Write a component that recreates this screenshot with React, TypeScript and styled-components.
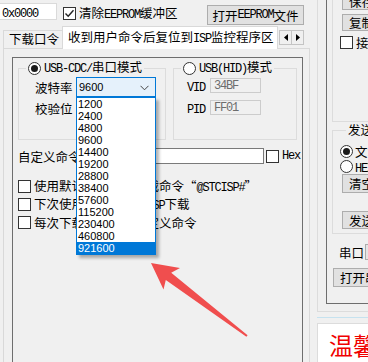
import React from 'react'
import styled, { createGlobalStyle } from 'styled-components'

const GlobalStyle = createGlobalStyle`
  html, body {
    margin: 0;
    padding: 0;
  }
  body {
    width: 368px;
    height: 362px;
    overflow: hidden;
    background: #f0f0f0;
    font-family: "Noto Sans CJK SC", sans-serif;
    font-size: 12.5px;
    color: #000;
  }
`

const rates = ['1200', '2400', '4800', '9600', '14400', '19200', '28800', '38400', '57600', '115200', '230400', '460800', '921600']

export default function App(): JSX.Element {
    return (
        <Screen>
            <GlobalStyle />
            <LeftColumn>
                <TopRow>
                    <AddrBox><Lat>0x0000</Lat></AddrBox>
                    <CheckLine $top={7} $left={6}>
                        <CheckBox checked />
                        <span>清除<Lat>EEPROM</Lat>缓冲区</span>
                    </CheckLine>
                    <Button $width={97} $height={20} $top={5} $right={6} $center>打开<Lat>EEPROM</Lat>文件</Button>
                </TopRow>

                <TabStrip>
                    <Tab>下载口令</Tab>
                    <Tab $active>收到用户命令后复位到<Lat>ISP</Lat>监控程序区</Tab>
                    <ScrollBtns>
                        <ScrollBtn><Tri $dir="left" /></ScrollBtn>
                        <ScrollBtn><Tri $dir="right" /></ScrollBtn>
                    </ScrollBtns>
                </TabStrip>

                <TabPage>
                    <Frame>
                        <GroupRow>
                            <Group $width={148}>
                                <Legend>
                                    <Radio checked />
                                    <span><Lat>USB-CDC/</Lat>串口模式</span>
                                </Legend>
                                <FieldRow $top={2} $height={20} $indent={16}>
                                    <FieldLabel $width={41}>波特率</FieldLabel>
                                    <Combo $active>
                                        9600
                                        <Chevron />
                                        <DropList>
                                            {rates.map((r) => (
                                                <DropItem key={r} $selected={r === '921600'}>{r}</DropItem>
                                            ))}
                                        </DropList>
                                    </Combo>
                                </FieldRow>
                                <FieldRow $top={3} $height={17} $indent={16}>
                                    <FieldLabel $width={41}>校验位</FieldLabel>
                                </FieldRow>
                            </Group>
                            <Group $width={124}>
                                <Legend>
                                    <Radio />
                                    <span><Lat>USB(HID)</Lat>模式</span>
                                </Legend>
                                <FieldRow $top={3} $height={15} $indent={13}>
                                    <FieldLabel $width={23}><Lat>VID</Lat></FieldLabel>
                                    <TextBox $width={51} $disabled><Lat>34BF</Lat></TextBox>
                                </FieldRow>
                                <FieldRow $top={7} $height={15} $indent={13}>
                                    <FieldLabel $width={23}><Lat>PID</Lat></FieldLabel>
                                    <TextBox $width={51} $disabled><Lat>FF01</Lat></TextBox>
                                </FieldRow>
                            </Group>
                        </GroupRow>

                        <FieldRow $top={8} $height={16} $indent={0}>
                            <FieldLabel $width={58}>自定义命令</FieldLabel>
                            <TextBox $width={188} />
                            <CheckLine $top={0} $left={2}>
                                <CheckBox />
                                <Lat>Hex</Lat>
                            </CheckLine>
                        </FieldRow>

                        <Options>
                            <CheckLine $top={0} $left={0}>
                                <CheckBox />
                                <span>使用默认的自定义下载命令“<Lat>@STCISP#</Lat>”</span>
                            </CheckLine>
                            <CheckLine $top={0} $left={0}>
                                <CheckBox />
                                <span>下次使用时自动进入<Lat>ISP</Lat>下载</span>
                            </CheckLine>
                            <CheckLine $top={0} $left={0}>
                                <CheckBox />
                                <span>每次下载前都发送自定义命令</span>
                            </CheckLine>
                        </Options>
                    </Frame>
                </TabPage>
            </LeftColumn>

            <RightPanel>
                <RightInner>
                    <UpperBox>
                        <SideFrame>
                            <RecvGroup>
                                <Button $width={60} $height={17} $top={0}>保存</Button>
                                <Button $width={60} $height={17} $top={4}>复制</Button>
                                <CheckLine $top={5} $left={-2}>
                                    <CheckBox />
                                    <span>接收</span>
                                </CheckLine>
                            </RecvGroup>
                            <SendGroup>
                                <Legend $left={6}>发送缓冲区</Legend>
                                <RadioLine $top={7}>
                                    <Radio checked />
                                    <span>文本模式</span>
                                </RadioLine>
                                <RadioLine $top={1}>
                                    <Radio />
                                    <span><Lat>HEX</Lat>模式</span>
                                </RadioLine>
                                <Button $width={60} $height={19} $top={1} $left={2}>清空</Button>
                                <Button $width={60} $height={18} $top={18} $left={2}>发送</Button>
                            </SendGroup>
                            <FieldRow $top={10} $height={16} $indent={7}>
                                <FieldLabel $width={26}>串口</FieldLabel>
                                <Combo>COM3</Combo>
                            </FieldRow>
                            <Button $width={100} $height={19} $top={8} $left={1}>打开串口</Button>
                        </SideFrame>
                    </UpperBox>
                    <Splitter />
                    <Notice>温馨提示</Notice>
                </RightInner>
            </RightPanel>

            <Pointer viewBox="0 0 368 362" width={368} height={362}>
                <polygon
                    points="151,263 180,268 171.2,272.7 247.6,335.2 246.4,336.8 165.8,279.9 163.5,289.5"
                    fill="#f04e4e"
                />
            </Pointer>
        </Screen>
    )
}

function CheckBox(props: { checked?: boolean }): JSX.Element {
    return (
        <Box>
            {props.checked && (
                <svg width="11" height="11" viewBox="0 0 11 11">
                    <polyline points="1.5,5.5 4.2,8.2 9.5,2.2" fill="none" stroke="#222" strokeWidth="1.4" />
                </svg>
            )}
        </Box>
    )
}

function Radio(props: { checked?: boolean }): JSX.Element {
    return <Round>{props.checked && <Dot />}</Round>
}

function Chevron(): JSX.Element {
    return (
        <ChevronIcon width="9" height="6" viewBox="0 0 9 6">
            <polyline points="0.5,0.8 4.5,4.8 8.5,0.8" fill="none" stroke="#444" strokeWidth="1" />
        </ChevronIcon>
    )
}

function Tri(props: { $dir: 'left' | 'right' }): JSX.Element {
    return (
        <svg width="4" height="7" viewBox="0 0 4 7">
            {props.$dir === 'left'
                ? <polygon points="4,0 0,3.5 4,7" fill="#000" />
                : <polygon points="0,0 4,3.5 0,7" fill="#000" />}
        </svg>
    )
}

const Screen = styled.div`
    position: relative;
    display: flex;
    width: 368px;
    height: 362px;
    overflow: hidden;
`

const Lat = styled.span`
    font-family: "Liberation Mono", monospace;
    font-size: 12px;
    letter-spacing: -1.2px;
`

const LeftColumn = styled.div`
    width: 310px;
    flex: none;
    display: flex;
    flex-direction: column;
`

const TopRow = styled.div`
    height: 26px;
    display: flex;
    align-items: flex-start;
`

const AddrBox = styled.div`
    margin-top: 3px;
    width: 57px;
    height: 17px;
    box-sizing: border-box;
    background: #fff;
    border: 1px solid #dadada;
    border-left: none;
    padding-left: 2px;
    line-height: 15px;
`

const CheckLine = styled.label<{ $top: number; $left: number }>`
    display: flex;
    align-items: center;
    gap: 3px;
    height: 13px;
    line-height: 13px;
    margin-top: ${(p) => p.$top}px;
    margin-left: ${(p) => p.$left}px;
    white-space: nowrap;
`

const RadioLine = styled.div<{ $top: number }>`
    display: flex;
    align-items: center;
    gap: 2px;
    height: 14px;
    margin-top: ${(p) => p.$top}px;
    white-space: nowrap;
`

const Box = styled.span`
    width: 13px;
    height: 13px;
    box-sizing: border-box;
    border: 1px solid #333;
    background: #fff;
    display: inline-flex;
    align-items: center;
    justify-content: center;
    flex: none;
`

const Round = styled.span`
    width: 13px;
    height: 13px;
    box-sizing: border-box;
    border: 1px solid #333;
    border-radius: 50%;
    background: #fff;
    display: inline-flex;
    align-items: center;
    justify-content: center;
    flex: none;
`

const Dot = styled.span`
    width: 7px;
    height: 7px;
    border-radius: 50%;
    background: #1a1a1a;
`

const Button = styled.div<{ $width: number; $height: number; $top: number; $left?: number; $right?: number; $center?: boolean }>`
    width: ${(p) => p.$width}px;
    height: ${(p) => p.$height}px;
    margin-top: ${(p) => p.$top}px;
    margin-left: ${(p) => (p.$right !== undefined ? 'auto' : `${p.$left ?? 0}px`)};
    margin-right: ${(p) => p.$right ?? 0}px;
    box-sizing: border-box;
    border: 1px solid #adadad;
    background: #e1e1e1;
    display: flex;
    align-items: center;
    justify-content: ${(p) => (p.$center ? 'center' : 'flex-start')};
    padding-left: ${(p) => (p.$center ? 0 : 6)}px;
    white-space: nowrap;
    flex: none;
`

const TabStrip = styled.div`
    position: relative;
    z-index: 1;
    height: 22px;
    display: flex;
    align-items: flex-end;
    padding-left: 3px;
`

const Tab = styled.div<{ $active?: boolean }>`
    box-sizing: border-box;
    width: ${(p) => (p.$active ? 216 : 60)}px;
    height: ${(p) => (p.$active ? 23 : 18)}px;
    margin-left: ${(p) => (p.$active ? -1 : 0)}px;
    margin-bottom: ${(p) => (p.$active ? -1 : 0)}px;
    border: 1px solid #d9d9d9;
    border-bottom: none;
    background: ${(p) => (p.$active ? '#fff' : '#f0f0f0')};
    padding-left: 5px;
    line-height: ${(p) => (p.$active ? 20 : 16)}px;
    white-space: nowrap;
`

const ScrollBtns = styled.div`
    display: flex;
    align-self: flex-start;
    margin: 4px 6px 0 auto;
`

const ScrollBtn = styled.div`
    width: 13px;
    height: 15px;
    box-sizing: border-box;
    border: 1px solid #c4c4c4;
    background: #f0f0f0;
    display: flex;
    align-items: center;
    justify-content: center;
    & + & {
        width: 12px;
        border-left: none;
    }
`

const TabPage = styled.div`
    flex: 1;
    margin-left: 3px;
    border: 1px solid #d9d9d9;
    border-bottom: none;
    padding: 8px 6px 0 8px;
    display: flex;
    flex-direction: column;
`

const Frame = styled.div`
    flex: 1;
    border: 1px solid #6e6e6e;
    border-bottom: none;
    padding: 3px 5px 0 5px;
    display: flex;
    flex-direction: column;
`

const GroupRow = styled.div`
    display: flex;
    gap: 7px;
`

const Group = styled.fieldset<{ $width: number }>`
    width: ${(p) => p.$width}px;
    height: 79px;
    box-sizing: border-box;
    margin: 0;
    padding: 0;
    border: 1px solid #dcdcdc;
    min-width: 0;
`

const Legend = styled.legend<{ $left?: number }>`
    margin-left: ${(p) => p.$left ?? 7}px;
    padding: 0 2px;
    height: 14px;
    line-height: 14px;
    display: flex;
    align-items: center;
    gap: 3px;
    white-space: nowrap;
`

const FieldRow = styled.div<{ $top: number; $height: number; $indent: number }>`
    display: flex;
    align-items: center;
    margin-top: ${(p) => p.$top}px;
    height: ${(p) => p.$height}px;
    padding-left: ${(p) => p.$indent}px;
    white-space: nowrap;
`

const FieldLabel = styled.span<{ $width: number }>`
    width: ${(p) => p.$width}px;
    flex: none;
`

const TextBox = styled.div<{ $width: number; $disabled?: boolean }>`
    width: ${(p) => p.$width}px;
    height: 100%;
    box-sizing: border-box;
    flex: none;
    border: 1px solid ${(p) => (p.$disabled ? '#cccccc' : '#7a7a7a')};
    background: ${(p) => (p.$disabled ? '#f0f0f0' : '#fff')};
    color: ${(p) => (p.$disabled ? '#6d6d6d' : '#000')};
    padding-left: 3px;
    display: flex;
    align-items: center;
`

const Combo = styled.div<{ $active?: boolean }>`
    position: relative;
    width: 80px;
    height: 100%;
    box-sizing: border-box;
    flex: none;
    border: 1px solid ${(p) => (p.$active ? '#0078d7' : '#acacac')};
    background: ${(p) => (p.$active ? '#e5f1fb' : '#e5e5e5')};
    padding-left: 2px;
    display: flex;
    align-items: center;
    font-family: "Liberation Sans", sans-serif;
    font-size: 11px;
`

const ChevronIcon = styled.svg`
    position: absolute;
    right: 6px;
    top: 7px;
`

const DropList = styled.div`
    position: absolute;
    z-index: 5;
    left: -1px;
    top: calc(100% + 1px);
    width: 80px;
    box-sizing: border-box;
    border: 1px solid #0078d7;
    background: #fff;
    box-shadow: 3px 3px 3px rgba(0, 0, 0, 0.3);
`

const DropItem = styled.div<{ $selected?: boolean }>`
    height: 12px;
    line-height: 12px;
    padding-left: 1px;
    background: ${(p) => (p.$selected ? '#0078d7' : 'transparent')};
    color: ${(p) => (p.$selected ? '#fff' : '#000')};
`

const Options = styled.div`
    margin-top: 16px;
    display: flex;
    flex-direction: column;
    gap: 5px;
`

const RightPanel = styled.div`
    flex: 1;
    overflow: hidden;
    padding-left: 7px;
`

const RightInner = styled.div`
    width: 160px;
    margin-top: -30px;
    display: flex;
    flex-direction: column;
`

const UpperBox = styled.div`
    border: 1px solid #dcdcdc;
    border-right: none;
    padding: 8px 0 7px 8px;
`

const SideFrame = styled.div`
    border: 1px solid #6e6e6e;
    border-right: none;
    padding: 5px 0 16px 5px;
    display: flex;
    flex-direction: column;
`

const RecvGroup = styled.div`
    height: 137px;
    box-sizing: border-box;
    border-left: 1px solid #dcdcdc;
    border-bottom: 1px solid #dcdcdc;
    padding: 8px 0 0 9px;
    display: flex;
    flex-direction: column;
`

const SendGroup = styled.fieldset`
    margin: 1px 0 0 0;
    padding: 0 0 4px 7px;
    border: 1px solid #dcdcdc;
    border-right: none;
    min-width: 0;
    display: flex;
    flex-direction: column;
`

const Splitter = styled.div`
    margin-top: 5px;
    height: 1px;
    background: #c6e2ef;
`

const Notice = styled.div`
    margin-top: 5px;
    height: 60px;
    border: 1px solid #dcdcdc;
    border-right: none;
    background: #fff;
    padding: 6px 0 0 11px;
    font-size: 24px;
    line-height: 30px;
    color: #f00000;
    white-space: nowrap;
`

const Pointer = styled.svg`
    position: absolute;
    left: 0;
    top: 0;
    pointer-events: none;
    z-index: 10;
`
